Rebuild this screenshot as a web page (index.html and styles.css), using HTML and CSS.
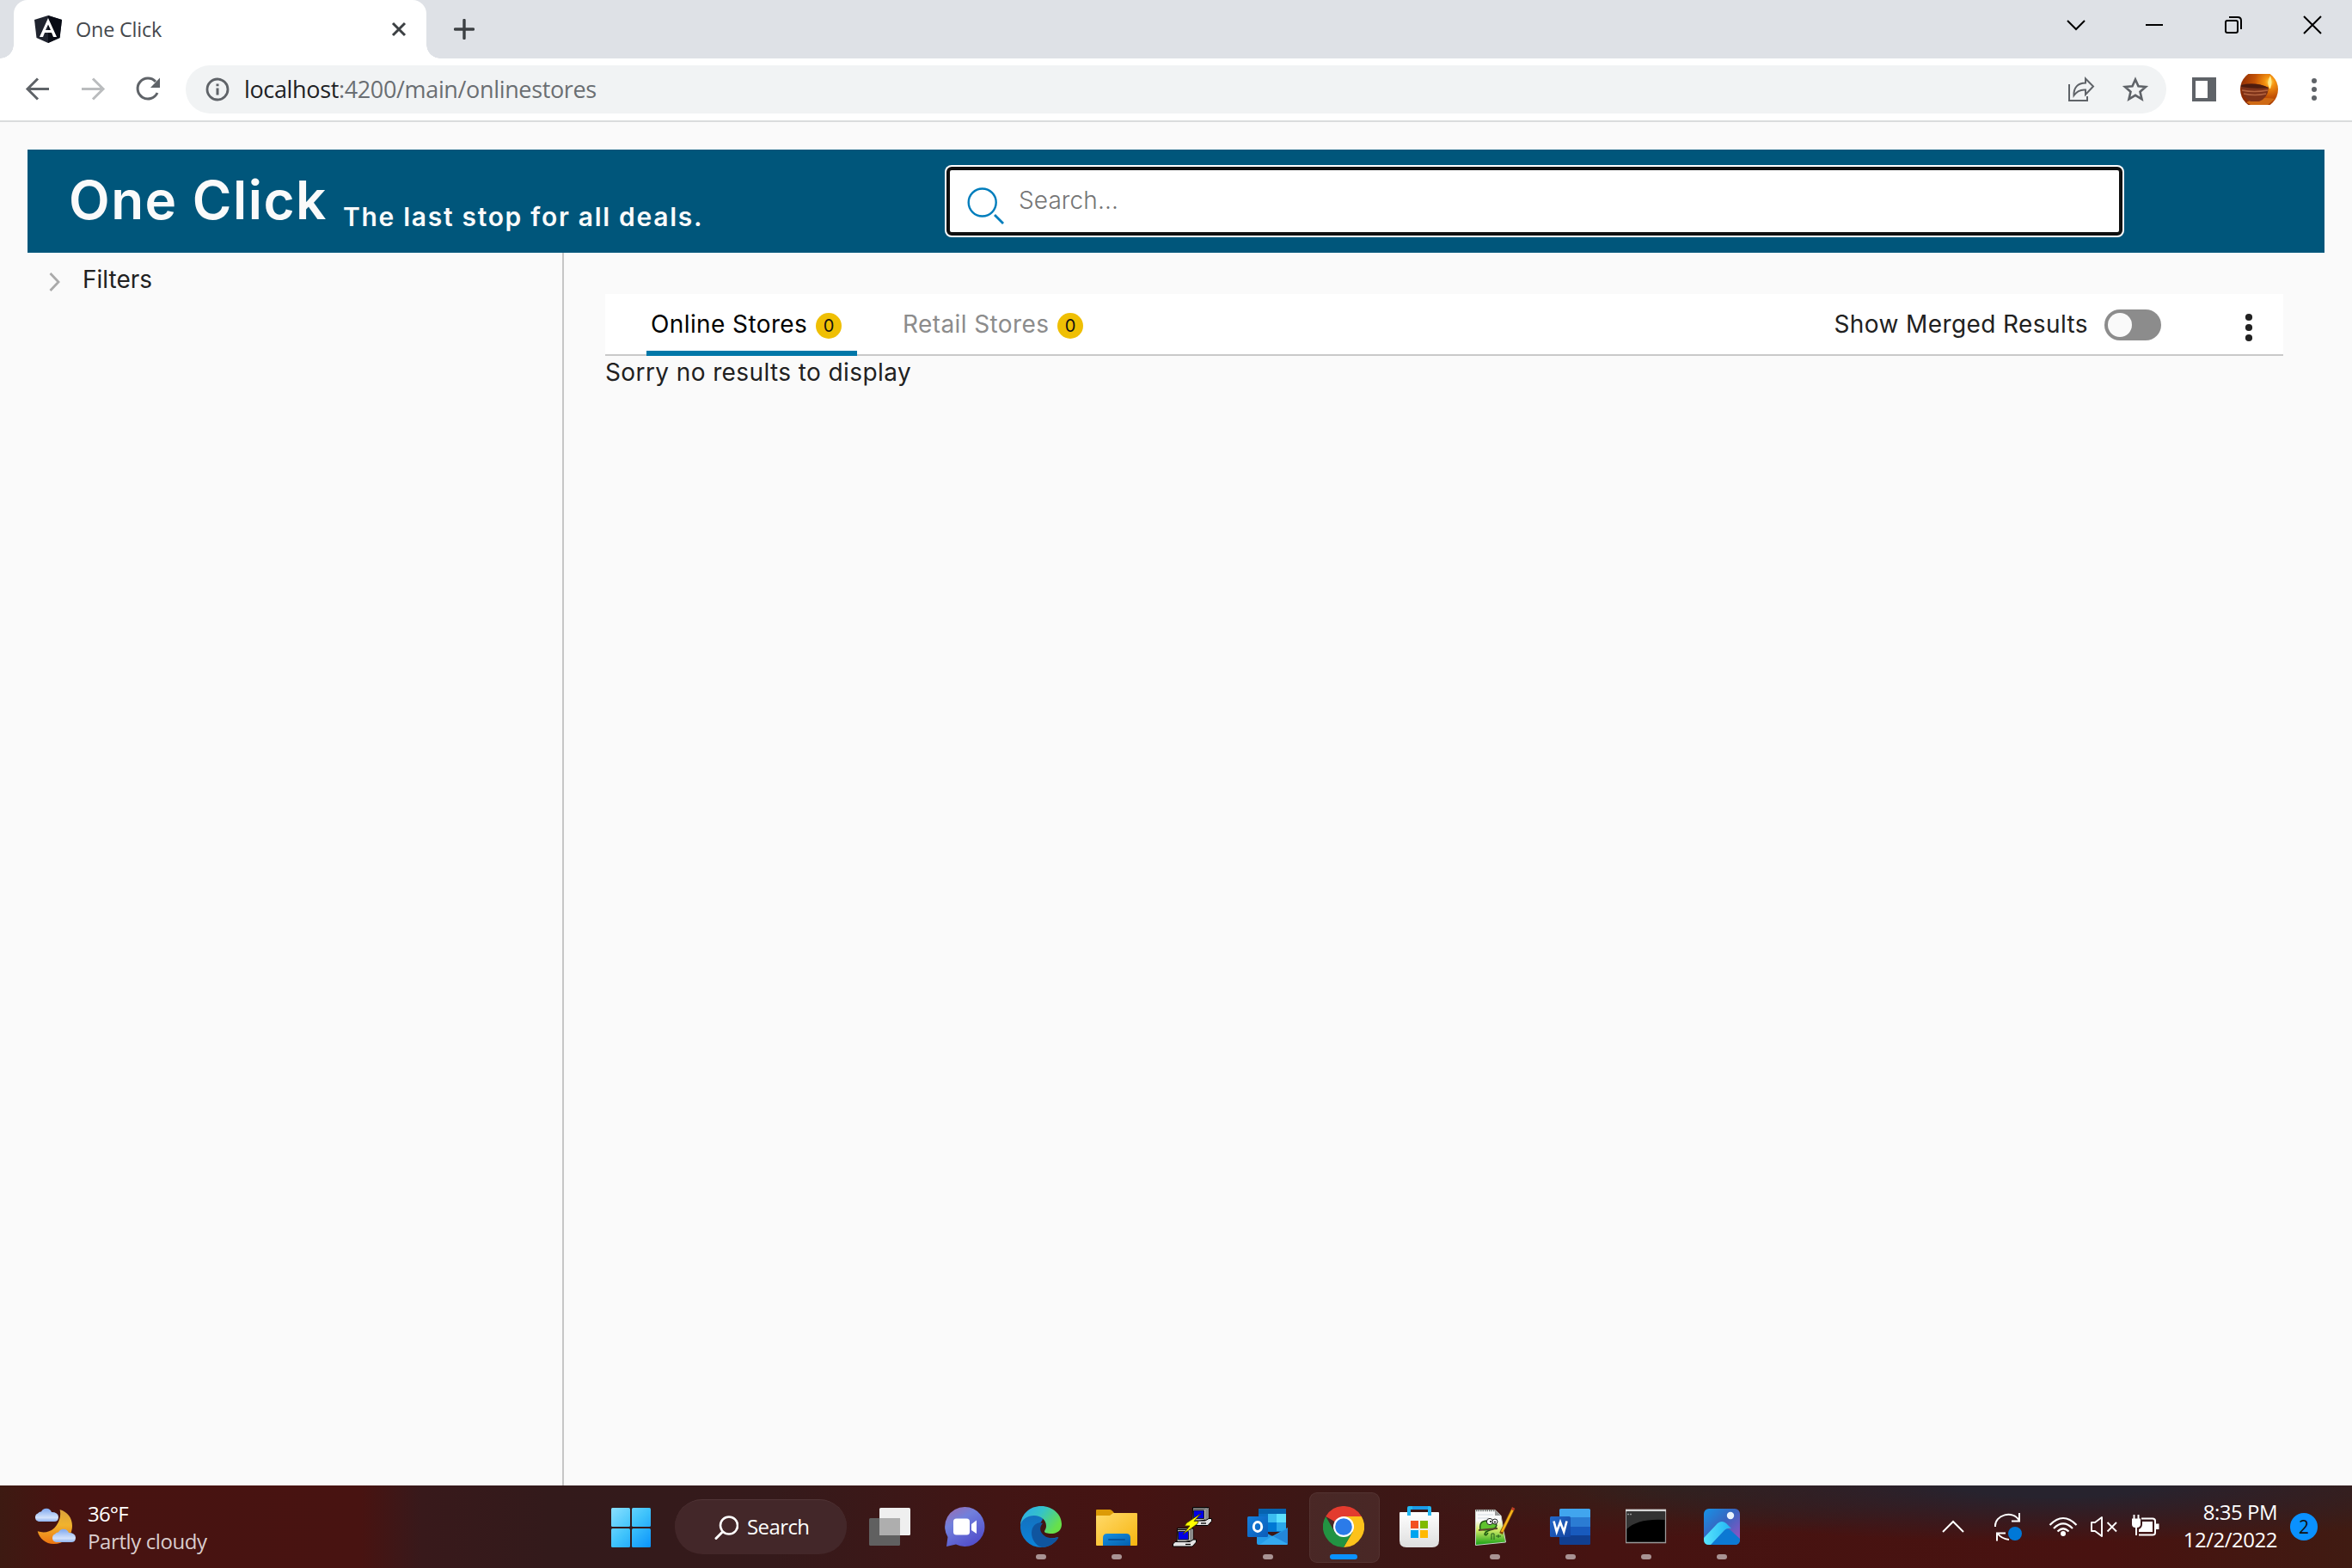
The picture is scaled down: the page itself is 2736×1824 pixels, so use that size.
FILE: index.html
```
<!DOCTYPE html>
<html lang="en">
<head>
<meta charset="utf-8">
<title>One Click</title>
<link rel="stylesheet" href="styles.css">
</head>
<body>
<div class="screen">

  <div class="tabstrip">
    <div class="tab">
      <svg class="tab-icon" width="32" height="32" viewBox="0 0 32 32"><path d="M16 0 32 5 29.500 26 16 32 2.500 26 0 5z" fill="#20242f"/><path d="M16 0 32 5 29.500 26 16 32z" fill="#080b15"/><path d="M16 3 6 25h4l2-5h8l2 5h4zM16 10.500l3 6.500h-6z" fill="#fff" fill-rule="evenodd"/></svg>
      <span class="tab-title">One Click</span>
      <svg class="tab-close" width="18" height="18" viewBox="0 0 18 18"><path d="M2 2 16 16M16 2 2 16" stroke="#3c4043" stroke-width="3"/></svg>
    </div>
    <svg class="new-tab" width="24" height="24" viewBox="0 0 24 24"><path d="M12 1.500V22.500M1.500 12H22.500" stroke="#3c4043" stroke-width="3.400" stroke-linecap="round"/></svg>
    <div class="window-controls">
      <svg width="92" height="58" viewBox="0 0 92 58"><path d="M37 24 47 34 57 24"/></svg>
      <svg width="92" height="58" viewBox="0 0 92 58"><path d="M36 29H56"/></svg>
      <svg width="92" height="58" viewBox="0 0 92 58"><rect x="37" y="24" width="14" height="14" rx="2"/><path d="M41 20H51Q55 20 55 24V34"/></svg>
      <svg width="92" height="58" viewBox="0 0 92 58"><path d="M36 19 56 39M56 19 36 39"/></svg>
    </div>
  </div>

  <div class="toolbar">
    <svg width="64" height="64" viewBox="0 0 64 64" fill="none" stroke="#5f6368" stroke-width="3"><path d="M45 31.500H21M32 19.500 20 31.500 32 43.500"/></svg>
    <svg width="64" height="64" viewBox="0 0 64 64" fill="none" stroke="#babcbe" stroke-width="3"><path d="M19 31.500H43M32 19.500 44 31.500 32 43.500"/></svg>
    <svg width="64" height="64" viewBox="0 0 64 64"><path d="M41 23A12 12 0 1 0 43 36" fill="none" stroke="#5f6368" stroke-width="3"/><path d="M46 18.500V30H35z" fill="#5f6368"/></svg>
    <div class="omnibox">
      <svg width="28" height="28" viewBox="0 0 28 28"><circle cx="14" cy="14" r="12" fill="none" stroke="#5f6368" stroke-width="2.800"/><path d="M14 12.500V20.500M14 7.500V10.300" stroke="#5f6368" stroke-width="3"/></svg>
      <span class="url"><b>localhost</b>:4200/main/onlinestores</span>
      <svg width="64" height="56" viewBox="0 0 64 56" fill="none" stroke="#5f6368" stroke-width="2"><path d="M19 22V41H40V36"/><path d="M24.500 35C24 26 29 20.500 38 20.500V15.500L47 24.500 38 34V28.500C32 28 28 30 24.500 35z"/></svg>
      <svg width="64" height="56" viewBox="0 0 64 56"><path d="M32 16.500 35.500 24.300 44 25 37.500 30.700 39.500 39.300 32 34.800 24.500 39.300 26.500 30.700 20 25 28.500 24.300z" fill="none" stroke="#5f6368" stroke-width="2.600"/></svg>
    </div>
    <svg class="side-panel" width="64" height="64" viewBox="0 0 64 64"><path d="M18 18H46V46H18zM22 22V42H36V22z" fill="#5f6368" fill-rule="evenodd"/></svg>
    <svg width="64" height="64" viewBox="0 0 64 64">
      <defs>
        <clipPath id="avatarClip"><path d="M10 14H54V50H10z"/></clipPath>
        <radialGradient id="flame" cx=".78" cy=".3" r=".8"><stop offset="0" stop-color="#ffd24a"/><stop offset=".16" stop-color="#f59310"/><stop offset=".5" stop-color="#c35205"/><stop offset="1" stop-color="#8c2b04"/></radialGradient>
      </defs>
      <g clip-path="url(#avatarClip)"><circle cx="32" cy="32" r="22" fill="url(#flame)"/><path d="M17 47Q32 40 50 43L42 50H22z" fill="#cf6a15"/><path d="M11 27Q28 23 43 30 42 42 32 46H22Q12 42 11 27z" fill="#7d3219"/><path d="M11 27Q28 23 43 30 28 32 11 29z" fill="#4d1c0e"/><path d="M12 33Q26 36 42 33M14 37Q27 40 40 37" stroke="#b5643f" stroke-width="1.500" fill="none"/><path d="M44 31Q40 24 45 16 48 24 45 31z" fill="#ffe98a"/></g>
    </svg>
    <svg width="64" height="64" viewBox="0 0 64 64" fill="#5f6368"><circle cx="32" cy="22" r="3"/><circle cx="32" cy="32" r="3"/><circle cx="32" cy="42" r="3"/></svg>
  </div>

  <div class="page">
    <header class="banner">
      <div class="brand">
        <span class="brand-name">One Click</span>
        <span class="brand-tag">The last stop for all deals.</span>
      </div>
      <div class="search">
        <svg width="44" height="44" viewBox="0 0 44 44" fill="none" stroke="#007dbc" stroke-width="2.400"><circle cx="17.700" cy="17.500" r="16"/><path d="M32 32 42 42" stroke-width="2.800"/></svg>
        <span>Search...</span>
      </div>
    </header>
    <div class="columns">
      <aside class="sidebar">
        <svg width="14" height="24" viewBox="0 0 14 24"><path d="M1.500 2 11 12 1.500 22" fill="none" stroke="#aaa" stroke-width="2.800"/></svg>
        <span>Filters</span>
      </aside>
      <main class="main">
        <nav class="store-tabs">
          <div class="store-tab active"><span class="label">Online Stores</span><span class="count">0</span></div>
          <div class="store-tab"><span class="label">Retail Stores</span><span class="count">0</span></div>
          <div class="merge">
            <span>Show Merged Results</span>
            <span class="toggle"><i class="knob"></i></span>
          </div>
          <svg class="more" width="12" height="36" viewBox="0 0 12 36" fill="#222"><circle cx="6" cy="6" r="4.100"/><circle cx="6" cy="18" r="4.100"/><circle cx="6" cy="30" r="4.100"/></svg>
        </nav>
        <p class="empty">Sorry no results to display</p>
      </main>
    </div>
  </div>

  <footer class="taskbar">
    <svg width="0" height="0" class="defs">
      <defs>
        <linearGradient id="cloud" x2="0" y2="1"><stop offset="0" stop-color="#7fa8ee"/><stop offset=".7" stop-color="#d3e2fb"/><stop offset="1" stop-color="#8fb2ee"/></linearGradient>
        <linearGradient id="moon" x1="0.500" x2=".5" y2="1"><stop offset="0" stop-color="#dba23a"/><stop offset=".45" stop-color="#f0b32e"/><stop offset="1" stop-color="#ee7410"/></linearGradient>
        <linearGradient id="win" gradientUnits="userSpaceOnUse" x1="0" y1="2" x2="46" y2="48"><stop offset="0" stop-color="#8ae0ff"/><stop offset=".5" stop-color="#3fc3fb"/><stop offset="1" stop-color="#0a93fb"/></linearGradient>
        <linearGradient id="chat" x2=".6" y2="1"><stop offset="0" stop-color="#a06aac"/><stop offset=".4" stop-color="#7180dc"/><stop offset="1" stop-color="#5350cc"/></linearGradient>
        <linearGradient id="edgeTop" x2="1" y2=".5"><stop offset="0" stop-color="#2ba7f0"/><stop offset=".5" stop-color="#35c3c8"/><stop offset="1" stop-color="#67e04a"/></linearGradient>
        <linearGradient id="edgeSide" x2="0" y2="1"><stop offset="0" stop-color="#1470bd"/><stop offset="1" stop-color="#0b84da"/></linearGradient>
        <linearGradient id="folder" x2="1" y2="1"><stop offset="0" stop-color="#ffda6b"/><stop offset="1" stop-color="#f7b50f"/></linearGradient>
        <linearGradient id="folderBlue" x2="1" y2="1"><stop offset="0" stop-color="#178fe0"/><stop offset="1" stop-color="#0460ad"/></linearGradient>
        <linearGradient id="bag" x2="0" y2="1"><stop offset="0" stop-color="#fff"/><stop offset="1" stop-color="#dedede"/></linearGradient>
        <linearGradient id="grass" x2="0" y2="1"><stop offset=".3" stop-color="#fafafa"/><stop offset=".55" stop-color="#d9ee6c"/><stop offset="1" stop-color="#12a012"/></linearGradient>
        <linearGradient id="photo" x2="1" y2="1"><stop offset="0" stop-color="#1693e8"/><stop offset=".45" stop-color="#3766c0"/><stop offset="1" stop-color="#a34fc4"/></linearGradient>
        <linearGradient id="hill" x2="1" y2="0"><stop offset="0" stop-color="#58e4fd"/><stop offset="1" stop-color="#21b5f4"/></linearGradient>
        <linearGradient id="officeTile" x2="1" y2="1"><stop offset="0" stop-color="#157fdb"/><stop offset="1" stop-color="#0a5cb8"/></linearGradient>
        <linearGradient id="wordTile" x2="1" y2="1"><stop offset="0" stop-color="#2368c8"/><stop offset="1" stop-color="#1345a2"/></linearGradient>
      </defs>
    </svg>

    <div class="weather">
      <svg width="48" height="48" viewBox="0 0 48 48"><path d="M29.600 4C39 7 44 14 44 23 44 35 35 44 22.500 44 13 44 6 38 3.700 29.300 12 32 21 30 26 22 30 16 31 10 29.600 4z" fill="url(#moon)"/><path id="cl" d="M5 18A5 5 0 0 1 4 8.500Q6 6 8 6.500A6.500 6.500 0 0 1 20 7Q27.500 7 28 12.500 28 18 23 18z" fill="url(#cloud)"/><use href="#cl" x="20" y="24"/></svg>
      <div class="lines"><span class="temp">36°F</span><span class="sky">Partly cloudy</span></div>
    </div>

    <div class="app"><svg width="48" height="48" viewBox="0 0 48 48" fill="url(#win)"><rect y="2" width="22" height="22" rx="1.500"/><rect x="24" y="2" width="22" height="22" rx="1.500"/><rect y="26" width="22" height="22" rx="1.500"/><rect x="24" y="26" width="22" height="22" rx="1.500"/></svg></div>

    <div class="task-search">
      <svg width="28" height="28" viewBox="0 0 28 28" fill="none" stroke="#fff" stroke-width="2.600" stroke-linecap="round"><circle cx="17" cy="11.500" r="10"/><path d="M9.500 19 2 26.500" stroke-width="3"/></svg>
      <span>Search</span>
    </div>

    <div class="app"><svg width="48" height="48" viewBox="0 0 48 48"><rect x="12" y="2" width="36" height="32" rx="1.500" fill="#efefef"/><rect y="14" width="36" height="32" rx="1.500" fill="#606060"/><path d="M12 14H36V34H12z" fill="#aeaeae"/></svg></div>
    <div class="app"><svg width="48" height="48" viewBox="0 0 48 48"><path d="M23.500 1A23 23 0 1 1 13 44.500L2 47 3.500 36A23 23 0 0 1 23.500 1z" fill="url(#chat)"/><rect x="10" y="14.500" width="19" height="19" rx="3.500" fill="#fff"/><path d="M31 21 37 16.500V32L31 28z" fill="#fff"/></svg></div>

    <div class="app running"><svg width="48" height="48" viewBox="0 0 48 48"><path d="M0 24C0 12 9 6 22 11 32 15 20 20 18 26 18 34 30 40 44 36 40 43 34 48 24 48A24 24 0 0 1 0 24z" fill="url(#edgeSide)"/><path d="M44.500 36.500C35 39 27 36 24 30 22 26 24 22 26 20 20 17 13 23 13 31 13 39 18 46 25 48 34 47.500 41 43 44.500 36.500z" fill="#0f559f"/><path d="M0 22C1 9 11 0 24 0 38 0 48 10 48 21 48 29 42 32 36 32 31 32 28 31 28 29.500 28 28 30 27 30 23 30 16 24 11 16 11 8 11 2 15 0 22z" fill="url(#edgeTop)"/></svg></div>
    <div class="app running"><svg width="48" height="48" viewBox="0 0 48 48"><path d="M0 5Q0 4 1 4H16Q18 4 21 8L24 12H0z" fill="#dc9a07"/><path d="M0 12Q0 11 1 11H16L20 8H47Q48 8 48 9V45Q48 46 47 46H1Q0 46 0 45z" fill="url(#folder)"/><path d="M8 46V37Q8 32 13 32H35Q40 32 40 37V46z" fill="url(#folderBlue)"/><path d="M15 39H33" stroke="#07549c" stroke-width="2" stroke-linecap="round"/></svg></div>
    <div class="app"><svg width="48" height="48" viewBox="0 0 48 48"><g id="pc" stroke="#000" stroke-width="1"><path d="M24.500 1.500H43V16H39L24 19z" fill="#bdbdbd"/><path d="M24.500 1.500H43L41 3H24.500z" fill="#fff"/><path d="M25.500 5H37.500V14.500H25.500z" fill="#0000e6" stroke="#222"/><path d="M39 3V17L43 15V2z" fill="#8a8a8a" stroke="none"/><path d="M19.500 22.500V19.500L22 17H39L43 14.500H46.500V17.500L42 22.500z" fill="#e3e3e3"/><path d="M34 20H40" stroke-width="1.300"/></g><use href="#pc" x="-18" y="24.500"/><path d="M34 8.500 17.500 19.500 15 23H21L13 33 30 20.500 31 17.500H26z" fill="#ff0" stroke="#3a3500" stroke-width=".8"/></svg></div>
    <div class="app running"><svg width="48" height="48" viewBox="0 0 48 48"><path d="M13 4Q13 3 14 3H44Q45 3 45 4V30H13z" fill="#0a70c5"/><path d="M13 3H45V9H13z" fill="#0663b0"/><path d="M24 9H34V19H24z" fill="#3bbcf0"/><path d="M34 9H45V19H34z" fill="#5de0fc"/><path d="M24 19H34V29H24z" fill="#0078d4"/><path d="M34 19H45V29H34z" fill="#2ba7ea"/><path d="M11 25 29 35 47 25V43Q47 45 45 45H13Q11 45 11 43z" fill="#249be8"/><path d="M14 45 47 26V43Q47 45 45 45z" fill="#2387da"/><path d="M14 45 29 34.500 47 44Q46 45 45 45z" fill="#34a9f0"/><rect y="12" width="24" height="24" rx="1.500" fill="url(#officeTile)"/><ellipse cx="12" cy="24" rx="4.700" ry="5.400" fill="none" stroke="#fff" stroke-width="3"/></svg></div>
    <div class="app running current"><svg width="48" height="48" viewBox="0 0 48 48"><path d="M24 24 3.200 12A24 24 0 0 1 44.800 12z" fill="#e33b2e"/><path d="M24 12H44.800A24 24 0 0 1 24 48L34.400 30z" fill="#fcc21b"/><path d="M3.200 12 13.600 30 24 36 34.400 30 24 48A24 24 0 0 1 3.200 12z" fill="#229342"/><circle cx="24" cy="24" r="12" fill="#fff"/><circle cx="24" cy="24" r="9.800" fill="#2b7be9"/></svg></div>
    <div class="app"><svg width="48" height="48" viewBox="0 0 48 48"><path d="M1 8Q1 7 2 7H46Q47 7 47 8V40Q47 48 39 48H9Q1 48 1 40z" fill="url(#bag)"/><path d="M12 11V2H36V11" fill="none" stroke="#22b7f2" stroke-width="4" stroke-linejoin="round"/><path d="M16 2H34" stroke="#1a9be8" stroke-width="4"/><path d="M14 17H23V26H14z" fill="#f25022"/><path d="M25 17H34V26H25z" fill="#7fba00"/><path d="M14 28H23V37H14z" fill="#00a4ef"/><path d="M25 28H34V37H25z" fill="#ffb900"/></svg></div>
    <div class="app running"><svg width="48" height="48" viewBox="0 0 48 48"><path d="M1.500 4.500H24L31 11 36.500 42 1.500 45.500z" fill="url(#grass)" stroke="#c9d4c9" stroke-width="1"/><path d="M24 4.500V11H31z" fill="#999"/><path d="M2 5H24" stroke="#777" stroke-width="2.500" stroke-dasharray="1.500 1"/><path d="M4 10H22M4 14H17" stroke="#d4dbe3"/><path d="M7 27Q5 17 15 17 23 17 26 22 25 27 18 28 12 30 12 33 14 35 16 31" fill="#5fc22e" stroke="#1e5212" stroke-width="1.400"/><path d="M5 28 27 26" stroke="#59442a" stroke-width="2"/><circle cx="18" cy="18" r="3.600" fill="#fff" stroke="#222"/><circle cx="24" cy="18" r="3" fill="#fff" stroke="#222"/><circle cx="19" cy="18" r="1" fill="#000"/><circle cx="24" cy="18.500" r="1" fill="#000"/><path d="M20 39V32H23V39M25 35H31M28 33V37" fill="none" stroke="#205c1b"/><path d="M45.700 2 31 32" stroke="#7e4a0b" stroke-width="4"/><path d="M44.500 4.500 32 30" stroke="#f8b319" stroke-width="2.600"/><path d="M45.700 2 44.500 4.500" stroke="#c0392b" stroke-width="3"/></svg></div>
    <div class="app running"><svg width="48" height="48" viewBox="0 0 48 48"><path d="M11 4.500Q11 3 12.500 3H45.500Q47 3 47 4.500V13H11z" fill="#41a5ee"/><path d="M11 13H47V24H11z" fill="#2b7cd3"/><path d="M11 24H47V34H11z" fill="#185abd"/><path d="M11 34H47V43.500Q47 45 45.500 45H12.500Q11 45 11 43.500z" fill="#103f91"/><rect y="12" width="24" height="24" rx="1.500" fill="url(#wordTile)"/><path d="M4.500 17.500 7.800 30 12 18.500 16.200 30 19.500 17.500" fill="none" stroke="#fff" stroke-width="2.600"/></svg></div>
    <div class="app running"><svg width="48" height="48" viewBox="0 0 48 48"><path d="M.5 4.500H46.500V42.500H.5z" fill="#000" stroke="#9a9a9a" stroke-width="1.300"/><path d="M1 7H46V16Q14 14 1 27z" fill="#333"/><path d="M0 5H47" stroke="#d5d5d5" stroke-width="2.500"/><path d="M2 9.500H8" stroke="#999" stroke-width="1.300" stroke-dasharray="2 1"/></svg></div>
    <div class="app running"><svg width="48" height="48" viewBox="0 0 48 48"><rect x="3" y="3" width="42" height="42" rx="6" fill="url(#photo)"/><path d="M11 45 27 28Q30 25 34 28L45 38V39Q45 45 39 45z" fill="#0c79d3"/><path d="M3 37 19 20Q24 16 29 20L35 26Q30 25 27 28L11 45H9Q3 45 3 39z" fill="url(#hill)"/><circle cx="34" cy="11" r="4.200" fill="#eaf3fc"/></svg></div>

    <div class="tray">
      <svg width="64" height="64" viewBox="0 0 64 64"><path d="M20 38 32 26 44 38" fill="none" stroke="#fff" stroke-width="2"/></svg>
      <svg width="64" height="64" viewBox="0 0 64 64"><g fill="none" stroke="#fff" stroke-width="2"><path d="M17 32C16 18 38 12 45 25M45 16V25.500H36M33 47Q24 46 19.500 39.500M29 39.500H19V48.500"/></g><circle cx="40" cy="40" r="8" fill="#0078d7"/></svg>
      <svg class="wifi" width="48" height="48" viewBox="0 0 48 48"><g fill="none" stroke="#fff" stroke-width="2.200"><path d="M8.500 22Q24 6 39.500 22M13 26Q24 15 35 26M17.500 29.500Q24 23 30.500 29.500"/></g><circle cx="24" cy="32" r="3" fill="#fff"/></svg>
      <svg width="48" height="48" viewBox="0 0 48 48" fill="none" stroke="#fff" stroke-width="1.900"><path d="M9 19H13L21 13V35L13 29H9z" stroke-linejoin="round"/><path d="M27.500 19 38 29.500M38 19 27.500 29.500"/></svg>
      <svg width="48" height="48" viewBox="0 0 48 48"><path d="M19 14.500H32Q35 14.500 35 17V31Q35 33.500 32 33.500H16" fill="none" stroke="#fff" stroke-width="2"/><path d="M36 20.500H39.500V27H36zM20 18H32V30H16V27Q20 25 20 21zM8 14.500H18V22Q17 25 14 25V34H12V25Q8 25 8 21zM9.500 10H11.500V15H9.500zM14.500 10H16.500V15H14.500z" fill="#fff"/></svg>
      <div class="clock"><span>8:35 PM</span><span>12/2/2022</span></div>
      <span class="notify">2</span>
    </div>
  </footer>
</div>
</body>
</html>
```
FILE: styles.css
```
* { box-sizing: border-box; }
body { margin: 0; font-family: Inter, "Liberation Sans", sans-serif; }
svg { display: block; flex: none; }
.screen { width: 2736px; height: 1824px; display: flex; flex-direction: column; overflow: hidden; background: #fafafa; }

/* browser chrome */
.tabstrip { height: 68px; flex: none; display: flex; padding-left: 16px; background: #dee1e6; font-family: "Open Sans", sans-serif; }
.tab { position: relative; width: 480px; height: 68px; padding: 0 23px 0 24px; display: flex; align-items: center; background: #fff; border-radius: 16px 16px 0 0; }
.tab::before, .tab::after { content: ""; position: absolute; bottom: 0; width: 16px; height: 16px; }
.tab::before { left: -16px; background: radial-gradient(circle at 0 0, transparent 15.5px, #fff 16px); }
.tab::after { right: -16px; background: radial-gradient(circle at 100% 0, transparent 15.5px, #fff 16px); }
.tab-title { flex: 1; margin-left: 16px; font-size: 23.4px; letter-spacing: -0.2px; color: #45484d; line-height: 32px; margin-bottom: 1px; }
.new-tab { align-self: center; margin-left: 32px; }
.window-controls { margin-left: auto; display: flex; fill: none; stroke: #000; stroke-width: 2; }

.toolbar { height: 74px; flex: none; display: flex; align-items: center; padding: 0 12px; background: #fff; border-bottom: 2px solid #dadcdd; }
.omnibox { flex: 1; height: 56px; margin-left: 12px; padding: 0 4px 0 23px; display: flex; align-items: center; background: #f1f3f4; border-radius: 28px; }
.url { flex: 1; margin-left: 17px; font: 27px/36px "Open Sans", sans-serif; letter-spacing: -0.35px; color: #6a6e72; }
.url b { font-weight: 400; color: #202124; }
.side-panel { margin-left: 12px; }

/* application */
.page { flex: 1; padding: 32px 32px 0; display: flex; flex-direction: column; font-size: 28px; line-height: 36px; color: #212121; }
.banner { height: 120px; flex: none; display: flex; align-items: center; padding-left: 48px; background: #00567b; }
.brand { width: 1021px; display: flex; align-items: center; color: #fafafa; font-weight: 600; white-space: nowrap; }
.brand-name { width: 319px; margin-bottom: 3px; font-size: 62px; line-height: 72px; letter-spacing: 1.5px; }
.brand-tag { margin-top: 36px; font-size: 30px; letter-spacing: 1.7px; }
.search { width: 1368px; height: 80px; display: flex; padding: 0 20px; background: #fff; border: 4px solid #101010; border-radius: 6px; box-shadow: 0 0 0 2px #fff; color: #757575; font-weight: 300; letter-spacing: 0.1px; }
.search svg { margin-top: 20px; }
.search span { margin: 17px 0 0 16px; }

.columns { flex: 1; display: flex; }
.sidebar { width: 624px; padding: 13px 0 0 25px; display: flex; align-items: flex-start; border-right: 2px solid #c6c6c6; letter-spacing: 0; }
.sidebar svg { margin: 9px 25px 0 0; }
.main { flex: 1; padding: 48px 48px 0; letter-spacing: 0.4px; }
.store-tabs { height: 72px; display: flex; padding-left: 48px; background: #fff; border-bottom: 2px solid #c9c9c9; white-space: nowrap; }
.store-tab { height: 72px; padding: 17px 18px 0 5px; display: flex; margin-right: 48px; color: #8c8c8c; border-bottom: 6px solid transparent; }
.store-tab.active { width: 245px; color: #000; border-color: #0077a8; }
.store-tab .label { width: 192px; }
.store-tab:nth-child(2) { padding-left: 5px; }
.store-tab:nth-child(2) .label { width: 180px; }
.count { width: 30px; height: 30px; margin-top: 5px; border-radius: 50%; background: #efbf04; color: #111; font-size: 20px; line-height: 30px; text-align: center; letter-spacing: 0; }
.merge { margin-left: auto; display: flex; padding-top: 18px; gap: 19px; line-height: 34px; }
.toggle { width: 66px; height: 36px; padding: 4px; border-radius: 18px; background: #8c8c8c; }
.knob { display: block; width: 28px; height: 28px; border-radius: 50%; background: #fafafa; }
.more { margin: 21px 34px 0 96px; }
.empty { margin: 1px 0 0; }

/* taskbar */
.taskbar { height: 96px; flex: none; display: flex; align-items: center; color: #fff; font: 24px/32px "Open Sans", sans-serif;
  background:
    radial-gradient(ellipse 560px 66px at 2390px 0, #27232e 20%, transparent 100%),
    radial-gradient(ellipse 330px 60px at 1950px 0, #33211b 0%, transparent 100%),
    linear-gradient(90deg, #3d1a12 0, #471311 70px, #481311 420px, #38191b 490px, #331a1b 640px, #351a1b 900px, #421514 1160px, #451312 1320px, #3b1816 1560px, #401514 1720px, #461311 1850px, #481210 2450px, #401b12 2736px); }
.defs { position: absolute; }
.weather { width: 691px; padding-left: 40px; display: flex; align-items: center; }
.lines { display: flex; flex-direction: column; margin: 1px 0 0 14px; }
.temp { letter-spacing: -0.8px; }
.sky { letter-spacing: -0.4px; color: #dacdcd; }
.app { position: relative; width: 88px; height: 96px; flex: none; display: flex; align-items: center; justify-content: center; }
.app svg { position: relative; }
.running::after { content: ""; position: absolute; left: 38px; top: 80px; width: 12px; height: 6px; border-radius: 3px; background: #a99393; }
.current::before { content: ""; position: absolute; left: 4px; top: 8px; width: 80px; height: 80px; border-radius: 9px; background: rgba(255,255,255,.07); border: 1px solid rgba(255,255,255,.06); }
.current::after { left: 28px; width: 32px; background: #0a91ff; }
.task-search { width: 200px; height: 64px; margin: 0 6px; padding-left: 46px; display: flex; align-items: center; gap: 10px; border-radius: 32px; background: #432729; border-top: 1px solid #513537; letter-spacing: -0.6px; }
.task-search span { margin-bottom: 2px; }
.tray { margin-left: auto; margin-right: 40px; display: flex; align-items: center; }
.wifi { margin-left: 8px; }
.clock { width: 129px; display: flex; flex-direction: column; text-align: right; letter-spacing: -0.5px; margin-top: -2px; }
.notify { width: 32px; height: 32px; margin-left: 15px; border-radius: 50%; background: #0a91ff; color: #111; font-size: 21px; text-align: center; }
```
